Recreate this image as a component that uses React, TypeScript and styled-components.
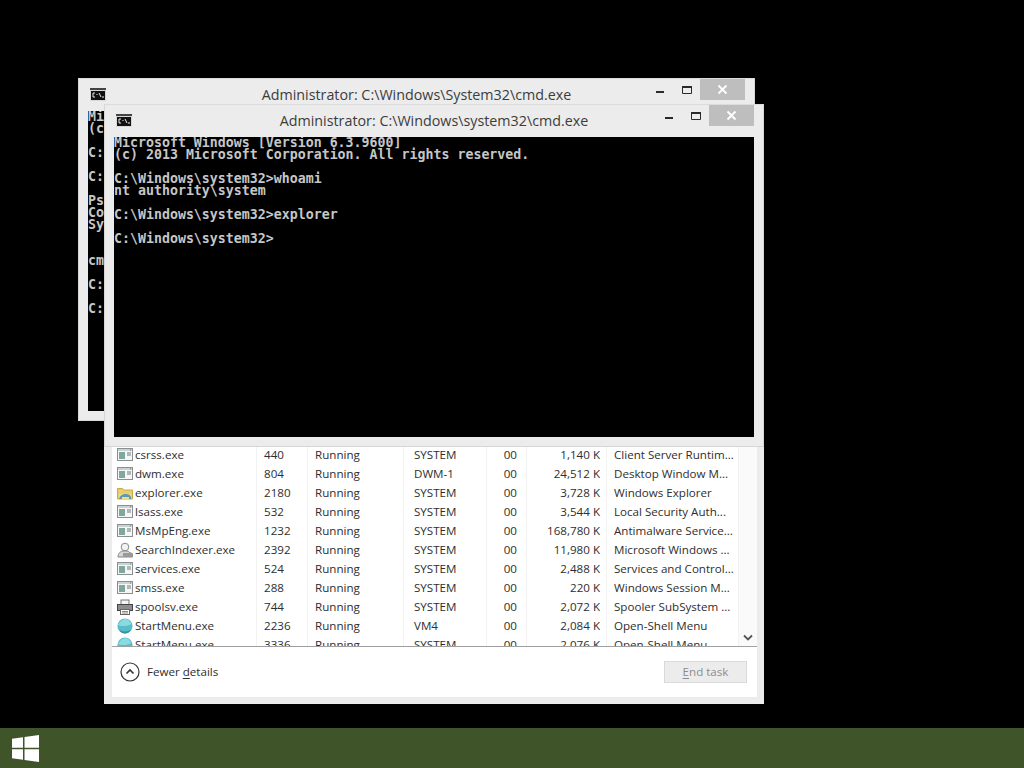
import React from "react";
import styled, { createGlobalStyle } from "styled-components";

const Global = createGlobalStyle`
  html, body { margin: 0; padding: 0; background: #000; }
  #root { width: 1024px; height: 768px; overflow: hidden; }
`;

const UI = `"Open Sans", "Noto Sans", "Liberation Sans", sans-serif`;

const Screen = styled.div`
  width: 1024px;
  height: 768px;
  display: flex;
  flex-direction: column;
  background: #000;
`;
const Desktop = styled.div`
  position: relative;
  flex: 1;
`;
const Taskbar = styled.div`
  height: 40px;
  display: flex;
  align-items: center;
  padding-left: 12px;
  background: #3f5429;
`;

const ConsoleWindow = styled.section<{ $left: number; $top: number; $w: number; $h: number; $z: number }>`
  position: absolute;
  left: ${(p) => p.$left}px;
  top: ${(p) => p.$top}px;
  width: ${(p) => p.$w}px;
  height: ${(p) => p.$h}px;
  z-index: ${(p) => p.$z};
  box-sizing: border-box;
  display: flex;
  flex-direction: column;
  padding: 0 9px 9px 9px;
  background: #ececec;
  border: 1px solid #d6d6d6;
  border-top-color: #dcdcdc;
`;
const TitleBar = styled.header`
  flex: none;
  height: 32px;
  display: grid;
  grid-template-columns: 1fr auto 1fr;
  align-items: start;
`;
const TitleIcon = styled.svg`
  margin: 9px 0 0 2px;
  display: block;
`;
const TitleText = styled.h1`
  margin: 0;
  padding-top: 6px;
  font: 400 14.3px/20px ${UI};
  color: #3c3c3c;
  white-space: nowrap;
`;
const Caption = styled.div`
  justify-self: end;
  display: flex;
  align-items: flex-start;
`;
const CaptionButton = styled.div`
  width: 27px;
  height: 21px;
  display: flex;
  align-items: center;
  justify-content: center;
`;
const CloseButton = styled.div`
  width: 45px;
  height: 21px;
  display: flex;
  align-items: center;
  justify-content: center;
  background: #bebebe;
`;
const Console = styled.pre`
  flex: 1;
  margin: 0;
  overflow: hidden;
  background: #000;
  color: #c6c6c6;
  font: 700 13.28px/12px "DejaVu Sans Mono", "Liberation Mono", monospace;
  white-space: pre;
`;

const TaskManager = styled.section`
  position: absolute;
  left: 104px;
  top: 436px;
  width: 660px;
  height: 268px;
  z-index: 1;
  box-sizing: border-box;
  display: flex;
  flex-direction: column;
  padding: 0 7px 7px 8px;
  background: #ececec;
`;
const ListArea = styled.div`
  flex: none;
  height: 211px;
  box-sizing: border-box;
  padding-top: 9px;
  display: flex;
  background: #fff;
  overflow: hidden;
  border-bottom: 1px solid #a0a0a0;
`;
const Rows = styled.div`
  width: 627px;
  flex: none;
`;
const Row = styled.div`
  height: 19px;
  display: grid;
  grid-template-columns: 145px 51px 96px 83px 40px 80px 132px;
  font: 400 11.6px/19px ${UI};
  color: #2e2e2e;
`;
const Cell = styled.div<{ $pad?: number; $end?: boolean; $last?: boolean }>`
  box-sizing: border-box;
  padding: ${(p) => (p.$end ? `0 ${p.$pad ?? 7}px 0 0` : `0 0 0 ${p.$pad ?? 7}px`)};
  text-align: ${(p) => (p.$end ? "right" : "left")};
  white-space: nowrap;
  overflow: hidden;
  border-right: 1px solid #f2f2f2;
`;
const NameCell = styled(Cell)`
  display: flex;
  align-items: center;
  gap: 2px;
  padding-left: 5px;
`;
const Scrollbar = styled.div`
  flex: 1;
  display: flex;
  justify-content: center;
  align-items: flex-end;
  padding-bottom: 4px;
  background: #fafafa;
`;
const Footer = styled.footer`
  flex: 1;
  display: flex;
  align-items: center;
  justify-content: space-between;
  padding: 0 10px 0 8px;
  background: #fff;
`;
const Details = styled.div`
  display: flex;
  align-items: center;
  gap: 7px;
  font: 400 11.6px/16px ${UI};
  color: #2e2e2e;
`;
const EndTask = styled.div`
  box-sizing: border-box;
  width: 83px;
  height: 22px;
  display: flex;
  align-items: center;
  justify-content: center;
  background: #ececec;
  border: 1px solid #dadada;
  font: 400 11.6px/16px ${UI};
  color: #8c8c8c;
`;
const Key = styled.span`
  text-decoration: underline;
  text-underline-offset: 2px;
  text-decoration-thickness: 1px;
`;

const CmdIcon = () => (
  <TitleIcon width="16" height="13" viewBox="0 0 16 13">
    <rect width="16" height="13" fill="#d8d8d8" />
    <rect x="0" y="0" width="16" height="2" fill="#444" />
    <rect x="1" y="3" width="14" height="9" fill="#111" />
    <path d="M3 5h2M3 9h2M3 5v4M7 6v1M7 9v0M9 5l2 4M12 9h2" stroke="#eee" strokeWidth="1" fill="none" />
  </TitleIcon>
);

const CaptionSet = () => (
  <Caption>
    <CaptionButton>
      <svg width="10" height="10" viewBox="0 0 10 10">
        <rect x="1" y="6" width="8" height="2" fill="#2a2a2a" />
      </svg>
    </CaptionButton>
    <CaptionButton>
      <svg width="12" height="12" viewBox="0 0 12 12">
        <path d="M1.5 2.5h9v7h-9z" fill="none" stroke="#2a2a2a" strokeWidth="1" />
        <rect x="1" y="2" width="10" height="2" fill="#2a2a2a" />
      </svg>
    </CaptionButton>
    <CloseButton>
      <svg width="11" height="11" viewBox="0 0 11 11">
        <path d="M1.5 1.5l8 8M9.5 1.5l-8 8" stroke="#fff" strokeWidth="1.8" fill="none" />
      </svg>
    </CloseButton>
  </Caption>
);

type IconKind = "app" | "folder" | "user" | "printer" | "globe";

const ProcIcon = ({ kind }: { kind: IconKind }) => {
  const common = { width: 16, height: 16, viewBox: "0 0 16 16" };
  if (kind === "folder")
    return (
      <svg {...common}>
        <path d="M0.5 3.5h5l1 1.5h9v9h-15z" fill="#e9cf6a" stroke="#c7ab4a" strokeWidth="1" />
        <path d="M2 9h12v5H2z" fill="#f1dc8c" />
        <path d="M2 14c1-4 4-5 7-5s4 1 5 3v2h-2v-2H5v2z" fill="#5f9bb0" />
      </svg>
    );
  if (kind === "user")
    return (
      <svg {...common}>
        <circle cx="8" cy="5" r="3.8" fill="#f2f2f2" stroke="#8a8a8a" />
        <path d="M1 15c0-4 3-6 5-6h4c2 0 2 2 4 2l1.5 1v3z" fill="#d6d6d6" stroke="#858585" />
        <rect x="6" y="11" width="9.5" height="4" fill="#9a9a9a" />
      </svg>
    );
  if (kind === "printer")
    return (
      <svg {...common}>
        <rect x="4" y="1" width="8" height="5" fill="#f4f4f4" stroke="#777" />
        <rect x="0.5" y="5.5" width="15" height="6" fill="#8c8c8c" stroke="#444" />
        <rect x="3.5" y="10.5" width="9" height="5" fill="#fff" stroke="#666" />
        <path d="M5 12.5h6M5 14h6" stroke="#888" />
      </svg>
    );
  if (kind === "globe")
    return (
      <svg {...common}>
        <circle cx="8" cy="8" r="7.6" fill="#58bccb" />
        <path d="M1 7c2-4 5-6 7-6 3 0 5 2 6.5 5-3 2-10 3-13.500 1z" fill="#8adbe0" />
        <path d="M2 11.500c3 2.500 9 2.500 12 0-1.500 3-4 4-6 4s-4.500-1-6-4z" fill="#38919f" />
      </svg>
    );
  return (
    <svg {...common}>
      <rect x="0.5" y="1.500" width="15" height="12" fill="#f6f6f6" stroke="#8b8f8f" />
      <rect x="1" y="2" width="14" height="2" fill="#c9d3d3" />
      <rect x="2" y="5" width="6" height="7" fill="#7fa79d" />
      <path d="M10 6h4M10 8h4M14 3h-1" stroke="#6d7a78" />
    </svg>
  );
};

type Proc = [string, IconKind, string, string, string, string];
const procs: Proc[] = [
  ["csrss.exe", "app", "440", "SYSTEM", "1,140 K", "Client Server Runtim..."],
  ["dwm.exe", "app", "804", "DWM-1", "24,512 K", "Desktop Window M..."],
  ["explorer.exe", "folder", "2180", "SYSTEM", "3,728 K", "Windows Explorer"],
  ["lsass.exe", "app", "532", "SYSTEM", "3,544 K", "Local Security Auth..."],
  ["MsMpEng.exe", "app", "1232", "SYSTEM", "168,780 K", "Antimalware Service..."],
  ["SearchIndexer.exe", "user", "2392", "SYSTEM", "11,980 K", "Microsoft Windows ..."],
  ["services.exe", "app", "524", "SYSTEM", "2,488 K", "Services and Control..."],
  ["smss.exe", "app", "288", "SYSTEM", "220 K", "Windows Session M..."],
  ["spoolsv.exe", "printer", "744", "SYSTEM", "2,072 K", "Spooler SubSystem ..."],
  ["StartMenu.exe", "globe", "2236", "VM4", "2,084 K", "Open-Shell Menu"],
  ["StartMenu.exe", "globe", "3336", "SYSTEM", "2,076 K", "Open-Shell Menu"],
];

const backText = `Microsoft Windows [Version 6.3.9600]
(c) 2013 Microsoft Corporation. All rights reserved.

C:\\Windows\\System32>cd \\

C:\\>psexec -s -i cmd

PsExec v2.2 - Execute processes remotely
Copyright (C) 2001-2016 Mark Russinovich
Sysinternals - www.sysinternals.com


cmd exited on WIN with error code 0.

C:\\>

C:\\>`;

const frontText = `Microsoft Windows [Version 6.3.9600]
(c) 2013 Microsoft Corporation. All rights reserved.

C:\\Windows\\system32>whoami
nt authority\\system

C:\\Windows\\system32>explorer

C:\\Windows\\system32>`;

export default function App() {
  return (
    <Screen>
      <Global />
      <Desktop>
        <ConsoleWindow $left={78} $top={78} $w={677} $h={343} $z={1}>
          <TitleBar>
            <CmdIcon />
            <TitleText>Administrator: C:\Windows\System32\cmd.exe</TitleText>
            <CaptionSet />
          </TitleBar>
          <Console>{backText}</Console>
        </ConsoleWindow>
        <TaskManager>
          <ListArea>
            <Rows>
              {procs.map(([name, icon, pid, user, mem, desc], i) => (
                <Row key={i}>
                  <NameCell>
                    <ProcIcon kind={icon} />
                    {name}
                  </NameCell>
                  <Cell>{pid}</Cell>
                  <Cell>Running</Cell>
                  <Cell $pad={10}>{user}</Cell>
                  <Cell $end $pad={9}>00</Cell>
                  <Cell $end $pad={6}>{mem}</Cell>
                  <Cell>{desc}</Cell>
                </Row>
              ))}
            </Rows>
            <Scrollbar>
              <svg width="10" height="8" viewBox="0 0 10 8">
                <path d="M1 1.500l4 4 4-4" fill="none" stroke="#555" strokeWidth="1.800" />
              </svg>
            </Scrollbar>
          </ListArea>
          <Footer>
            <Details>
              <svg width="20" height="20" viewBox="0 0 20 20">
                <circle cx="10" cy="10" r="9" fill="#fff" stroke="#333" strokeWidth="1.200" />
                <path d="M6.500 11.500L10 8l3.500 3.500" fill="none" stroke="#333" strokeWidth="1.600" />
              </svg>
              <span>
                Fewer <Key>d</Key>etails
              </span>
            </Details>
            <EndTask>
              <span>
                <Key>E</Key>nd task
              </span>
            </EndTask>
          </Footer>
        </TaskManager>
        <ConsoleWindow $left={104} $top={104} $w={660} $h={343} $z={2}>
          <TitleBar>
            <CmdIcon />
            <TitleText>Administrator: C:\Windows\system32\cmd.exe</TitleText>
            <CaptionSet />
          </TitleBar>
          <Console>{frontText}</Console>
        </ConsoleWindow>
      </Desktop>
      <Taskbar>
        <svg width="27" height="27" viewBox="0 0 27 27">
          <path d="M0 3.800L11 2.300V12.800H0zM12.500 2L27 0V12.800H12.500zM0 14.300H11V24.800L0 23.300zM12.500 14.300H27V27L12.500 25z" fill="#fff" />
        </svg>
      </Taskbar>
    </Screen>
  );
}
